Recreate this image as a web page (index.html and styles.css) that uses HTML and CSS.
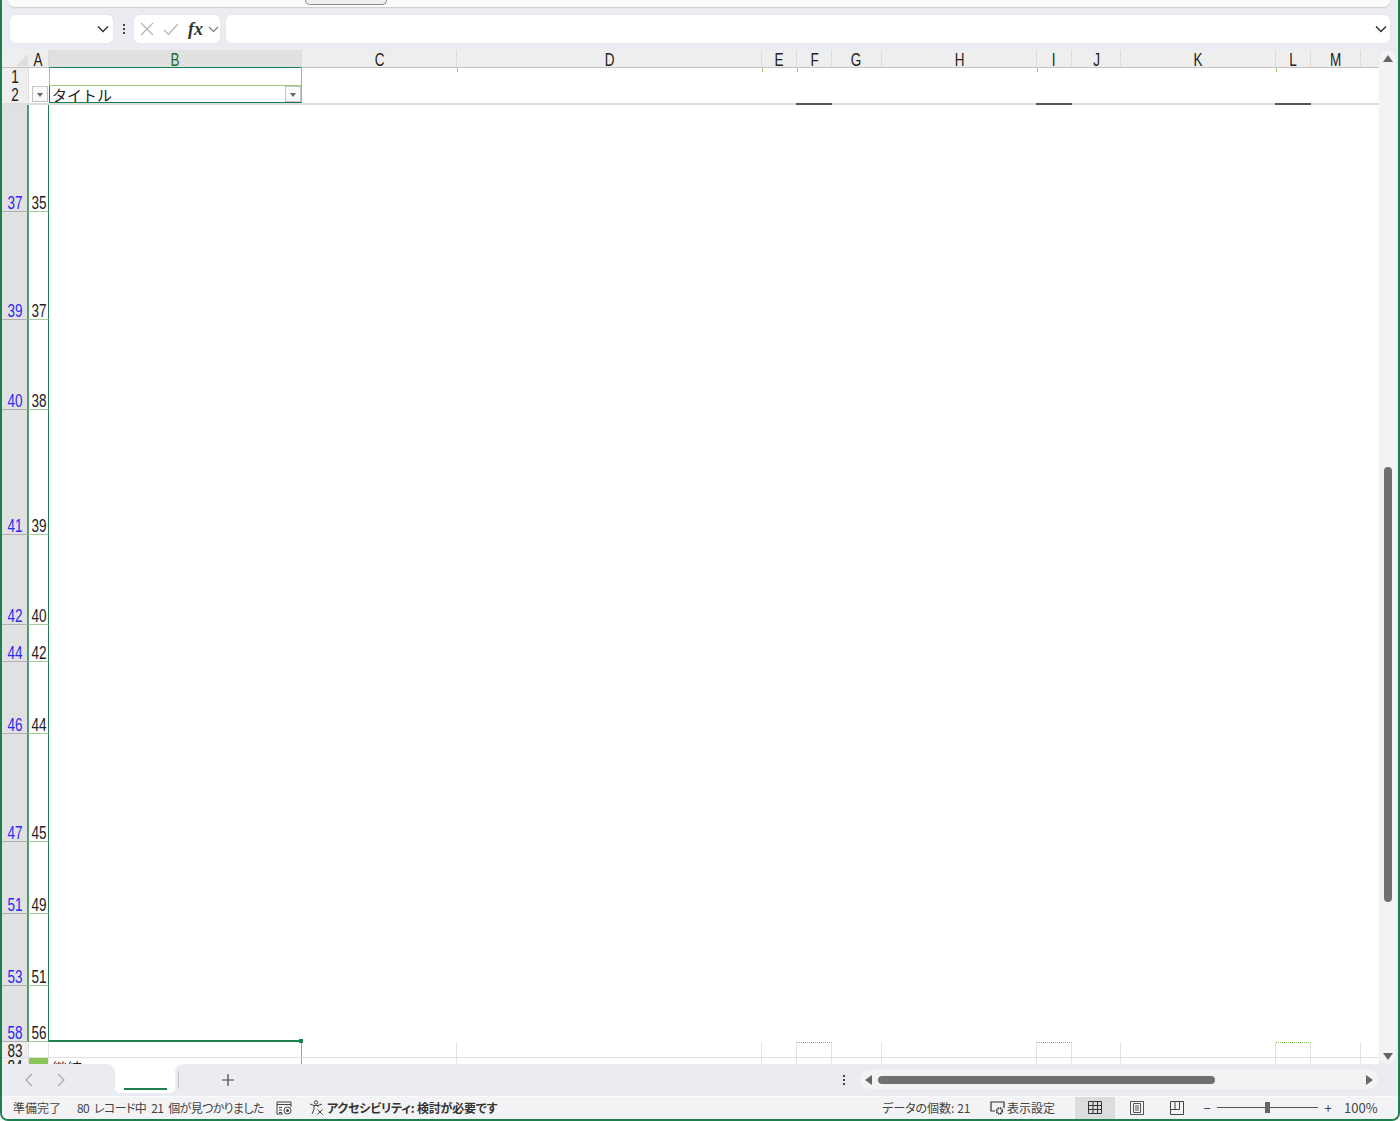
FILE: index.html
```html
<!DOCTYPE html>
<html lang="ja">
<head>
    <meta charset="UTF-8">
    <title>Excel</title>
    <link rel="stylesheet" href="styles.css">
</head>
<body>
<div class="window">
    <!-- bottom edge of the ribbon -->
    <div class="ribbon"><div class="ribbon-pill"></div></div>

    <!-- formula bar -->
    <div class="formula-bar">
        <div class="box name-box">
            <svg width="12" height="8" viewBox="0 0 12 8"><path d="M1 1.500l5 5 5-5" fill="none" stroke="#333" stroke-width="1.500"/></svg>
        </div>
        <div class="dots"><i></i><i></i><i></i></div>
        <div class="box fx-box">
            <svg width="14" height="14" viewBox="0 0 14 14"><path d="M1 1l12 12M13 1L1 13" fill="none" stroke="#b4b4b4" stroke-width="1.200"/></svg>
            <svg width="16" height="14" viewBox="0 0 16 14"><path d="M1 8l4.500 4.500L15 2" fill="none" stroke="#b4b4b4" stroke-width="1.200"/></svg>
            <span class="fx">fx</span>
            <svg width="11" height="7" viewBox="0 0 11 7"><path d="M1 1l4.500 4.500L10 1" fill="none" stroke="#777" stroke-width="1.100"/></svg>
        </div>
        <div class="box input-box">
            <svg width="12" height="8" viewBox="0 0 12 8"><path d="M1 1.500l5 5 5-5" fill="none" stroke="#333" stroke-width="1.500"/></svg>
        </div>
    </div>

    <!-- sheet -->
    <div class="sheet">
        <div class="grid">
            <div class="col-head">
                <div class="corner"></div>
                <div class="ch col-a"><span>A</span></div>
                <div class="ch col-b active"><span>B</span></div>
                <div class="ch col-c"><span>C</span></div>
                <div class="ch col-d"><span>D</span></div>
                <div class="ch col-e"><span>E</span></div>
                <div class="ch col-f"><span>F</span></div>
                <div class="ch col-g"><span>G</span></div>
                <div class="ch col-h"><span>H</span></div>
                <div class="ch col-i"><span>I</span></div>
                <div class="ch col-j"><span>J</span></div>
                <div class="ch col-k"><span>K</span></div>
                <div class="ch col-l"><span>L</span></div>
                <div class="ch col-m"><span>M</span></div>
                <div class="ch col-rest"></div>
            </div>

            <div class="row row-1">
                <div class="rh plain"><span>1</span></div>
                <div class="cell col-a"></div>
                <div class="cell col-b sel-top"></div>
                <div class="cell col-c tick"></div>
                <div class="cell col-d tick"></div>
                <div class="cell col-e tick"></div>
                <div class="cell col-f"></div>
                <div class="cell col-g"></div>
                <div class="cell col-h tick"></div>
                <div class="cell col-i"></div>
                <div class="cell col-j"></div>
                <div class="cell col-k tick"></div>
                <div class="cell col-l"></div>
                <div class="cell col-m"></div>
            </div>
            <div class="row row-2">
                <div class="rh plain"><span>2</span></div>
                <div class="cell col-a"><span class="filter"></span></div>
                <div class="cell col-b sel-title">タイトル<span class="filter"></span></div>
                <div class="cell col-c"></div>
                <div class="cell col-d"></div>
                <div class="cell col-e"></div>
                <div class="cell col-f dark"></div>
                <div class="cell col-g"></div>
                <div class="cell col-h"></div>
                <div class="cell col-i dark"></div>
                <div class="cell col-j"></div>
                <div class="cell col-k"></div>
                <div class="cell col-l dark"></div>
                <div class="cell col-m"></div>
            </div>

            <!-- filtered rows -->
            <div class="data">
                <div class="row filtered" style="height: 107px"><div class="rh"><span>37</span></div><div class="num"><span>35</span></div></div>
                <div class="row filtered" style="height: 108px"><div class="rh"><span>39</span></div><div class="num"><span>37</span></div></div>
                <div class="row filtered" style="height: 90px"><div class="rh"><span>40</span></div><div class="num"><span>38</span></div></div>
                <div class="row filtered" style="height: 125px"><div class="rh"><span>41</span></div><div class="num"><span>39</span></div></div>
                <div class="row filtered" style="height: 90px"><div class="rh"><span>42</span></div><div class="num"><span>40</span></div></div>
                <div class="row filtered" style="height: 37px"><div class="rh"><span>44</span></div><div class="num"><span>42</span></div></div>
                <div class="row filtered" style="height: 72px"><div class="rh"><span>46</span></div><div class="num"><span>44</span></div></div>
                <div class="row filtered" style="height: 108px"><div class="rh"><span>47</span></div><div class="num"><span>45</span></div></div>
                <div class="row filtered" style="height: 72px"><div class="rh"><span>51</span></div><div class="num"><span>49</span></div></div>
                <div class="row filtered" style="height: 72px"><div class="rh"><span>53</span></div><div class="num"><span>51</span></div></div>
                <div class="row filtered last" style="height: 56px"><div class="rh"><span>58</span></div><div class="num"><span>56</span></div><div class="handle"></div></div>
            </div>

            <div class="row row-83">
                <div class="rh plain"><span>83</span></div>
                <div class="cell col-a"></div>
                <div class="cell col-b edge"></div>
                <div class="cell col-c"></div>
                <div class="cell col-d"></div>
                <div class="cell col-e"></div>
                <div class="cell col-f dotted"></div>
                <div class="cell col-g"></div>
                <div class="cell col-h"></div>
                <div class="cell col-i dotted"></div>
                <div class="cell col-j"></div>
                <div class="cell col-k"></div>
                <div class="cell col-l dotted"></div>
                <div class="cell col-m"></div>
            </div>
            <div class="row row-84">
                <div class="rh plain"><span>84</span></div>
                <div class="cell col-a green"></div>
                <div class="cell col-b edge">継続</div>
                <div class="cell col-c"></div>
                <div class="cell col-d"></div>
                <div class="cell col-e"></div>
                <div class="cell col-f"></div>
                <div class="cell col-g"></div>
                <div class="cell col-h"></div>
                <div class="cell col-i"></div>
                <div class="cell col-j"></div>
                <div class="cell col-k"></div>
                <div class="cell col-l"></div>
                <div class="cell col-m"></div>
            </div>
        </div>

        <div class="vscroll">
            <svg width="10" height="7" viewBox="0 0 10 7"><path d="M5 0l5 7H0z" fill="#666"/></svg>
            <div class="vtrack"><div class="vthumb"></div></div>
            <svg width="10" height="7" viewBox="0 0 10 7"><path d="M5 7L0 0h10z" fill="#666"/></svg>
        </div>
    </div>

    <!-- sheet tabs -->
    <div class="tabbar">
        <div class="tab-nav">
            <svg width="9" height="14" viewBox="0 0 9 14"><path d="M8 1L2 7l6 6" fill="none" stroke="#aaa" stroke-width="1.300"/></svg>
            <svg width="9" height="14" viewBox="0 0 9 14"><path d="M1 1l6 6-6 6" fill="none" stroke="#aaa" stroke-width="1.300"/></svg>
        </div>
        <div class="tab"><span class="tab-line"></span></div>
        <div class="tab-rest">
            <span class="tab-sep"></span>
            <svg class="plus" width="12" height="12" viewBox="0 0 12 12"><path d="M6 0v12M0 6h12" stroke="#444" stroke-width="1.200"/></svg>
            <div class="dots tab-dots"><i></i><i></i><i></i></div>
            <div class="hscroll">
                <svg width="7" height="10" viewBox="0 0 7 10"><path d="M0 5l7-5v10z" fill="#666"/></svg>
                <div class="htrack"><div class="hthumb"></div></div>
                <svg width="7" height="10" viewBox="0 0 7 10"><path d="M7 5L0 10V0z" fill="#666"/></svg>
            </div>
        </div>
    </div>

    <!-- status bar -->
    <div class="status">
        <span class="st-ready">準備完了</span>
        <span class="st-records">80 レコード中 21 個が見つかりました</span>
        <svg class="st-macro" width="16" height="14" viewBox="0 0 16 14"><path d="M1 1h14M1 3.500h14M1 1v12h6M15 1v5M3 6.500h3M3 9h3M3 11.500h3" fill="none" stroke="#444"/><circle cx="11.500" cy="9.500" r="3.500" fill="none" stroke="#444"/><circle cx="11.500" cy="9.500" r="1.500" fill="#444"/></svg>
        <svg class="st-access" width="15" height="15" viewBox="0 0 15 15"><circle cx="7" cy="2.500" r="1.700" fill="none" stroke="#444"/><path d="M1 4l4 1.500h4L13 4M5 6v3l-2 5M9 6v1" fill="none" stroke="#444"/><path d="M8.500 9.500l5 5M13.500 9.500l-5 5" stroke="#444"/></svg>
        <b class="st-bold">アクセシビリティ: 検討が必要です</b>
        <span class="st-count">データの個数: 21</span>
        <svg class="st-display" width="15" height="14" viewBox="0 0 15 14"><path d="M5 10H1V1h13v6" fill="none" stroke="#333" stroke-width="1.200"/><circle cx="9.500" cy="10" r="2.800" fill="none" stroke="#333" stroke-width="1.800" stroke-dasharray="1.500 .7"/></svg>
        <span class="st-set">表示設定</span>
        <div class="view on">
            <svg width="14" height="13" viewBox="0 0 14 13"><path d="M.5.500h13v12H.5zM.5 4.500h13M.5 8.500h13M5 .5v12M9.500.5v12" fill="none" stroke="#333"/></svg>
        </div>
        <div class="view second">
            <svg width="14" height="14" viewBox="0 0 14 14"><path d="M.5.500h13v13H.5z" fill="none" stroke="#555"/><path d="M3.500 2.500h7v9h-7zM5 5h4M5 7h4M5 9h4" fill="none" stroke="#555"/></svg>
        </div>
        <div class="view">
            <svg width="14" height="14" viewBox="0 0 14 14"><path d="M.5.500h13v13H.5zM.5 8.500h9V.5M5 .5v8" fill="none" stroke="#444"/></svg>
        </div>
        <span class="zoom-sign">−</span>
        <div class="zoom-track"><div class="zoom-thumb"></div></div>
        <span class="zoom-sign">+</span>
        <span class="zoom-val">100%</span>
    </div>
</div>
</body>
</html>
```

FILE: styles.css
```css
* {
    box-sizing: border-box;
}
html, body {
    margin: 0;
    height: 100%;
    background: #fff;
}
.window {
    width: 1400px;
    height: 1121px;
    display: flex;
    flex-direction: column;
    background: #eaecf1;
    border: solid #1b7f4e;
    border-width: 0 2px 2px 2px;
    border-radius: 0 0 8px 8px;
    overflow: hidden;
    font-family: "Noto Sans CJK JP", "Noto Sans", sans-serif;
}

/* ribbon */
.ribbon {
    height: 7px;
    margin: 0 8px 0 6px;
    background: #fafafa;
    border-radius: 0 0 8px 8px;
    box-shadow: 0 1px 1px #cfcdcc;
}
.ribbon-pill {
    width: 82px;
    height: 5px;
    margin-left: 297px;
    background: #f0f0f0;
    border: 1px solid #8a8a8a;
    border-top: none;
    border-radius: 0 0 5px 5px;
}

/* formula bar */
.formula-bar {
    height: 44px;
    padding: 8px 8px 7px 8px;
    display: flex;
    align-items: stretch;
}
.box {
    background: #fff;
    border-radius: 5px;
    box-shadow: 0 0 1px #c8c8c8;
    display: flex;
    align-items: center;
}
.name-box {
    width: 103px;
    justify-content: flex-end;
    padding-right: 4px;
}
.dots {
    width: 21px;
    display: flex;
    flex-direction: column;
    align-items: center;
    justify-content: center;
    gap: 2px;
}
.dots i {
    width: 2px;
    height: 2px;
    background: #444;
}
.fx-box {
    width: 86px;
    padding-left: 6px;
    gap: 9px;
    margin-right: 6px;
}
.fx {
    font-family: "Liberation Serif", serif;
    font-style: italic;
    font-weight: bold;
    font-size: 18px;
    color: #333;
    margin: 0 -6px 0 0;
    width: 17px;
}
.input-box {
    flex: 1;
    justify-content: flex-end;
    padding-right: 3px;
}

/* sheet */
.sheet {
    height: 1014px;
    display: flex;
    align-items: stretch;
}
.grid {
    width: 1379px;
    margin-left: -2px;
    padding-left: 2px;
    background: #fff;
    overflow: hidden;
    font-family: "Liberation Sans", sans-serif;
    font-size: 18px;
    color: #222;
}
/* the reference font is a condensed one */
.ch span, .rh span, .num span {
    display: inline-block;
    transform: scaleX(.75);
}
.col-head {
    height: 18px;
    display: flex;
    background: #eeeeee;
    border-bottom: 1px solid #c4c4c4;
}
.corner {
    width: 27px;
    position: relative;
}
.corner::after {
    content: "";
    position: absolute;
    right: 1px;
    bottom: 1px;
    border-style: solid;
    border-width: 0 0 12px 12px;
    border-color: transparent transparent #dedede transparent;
}
.ch {
    border-right: 1px solid #dcdcdc;
    text-align: center;
    line-height: 20px;
}
.ch.active {
    background: #e0e0e0;
    color: #1f6b2e;
    border-bottom: 1px solid #1b7f4e;
    height: 18px;
}
.col-a { width: 20px; flex: none; }
.col-b { width: 253px; flex: none; }
.col-c { width: 155px; flex: none; }
.col-d { width: 305px; flex: none; }
.col-e { width: 35px; flex: none; }
.col-f { width: 35px; flex: none; }
.col-g { width: 50px; flex: none; }
.col-h { width: 155px; flex: none; }
.col-i { width: 35px; flex: none; }
.col-j { width: 49px; flex: none; }
.col-k { width: 155px; flex: none; }
.col-l { width: 35px; flex: none; }
.col-m { width: 50px; flex: none; }
.col-rest { flex: 1; border-right: none; }

.row {
    display: flex;
}
.rh {
    width: 27px;
    flex: none;
    padding-left: 1px;
    background: #e1e1e1;
    color: #2a2af0;
    border-right: 2px solid #4f9a73;
    border-bottom: 1px solid #b0b0b0;
    display: flex;
    align-items: flex-end;
    justify-content: center;
    line-height: 16px;
}
.rh.plain {
    background: #eeeeee;
    color: #222;
    border-right: 1px solid #dddddd;
    border-bottom: none;
}
.cell {
    position: relative;
}
.row-1 { height: 18px; }
.row-1 .rh { line-height: 18px; }
.row-2 {
    height: 19px;
    border-bottom: 2px solid #dddddd;
}
.sel-top {
    border-right: 1px solid #a8a8a8;
    border-left: 1px solid #9ccb7c;
    border-bottom: 1px solid #9ccb7c;
}
.sel-title {
    font-family: "Noto Sans CJK JP", sans-serif;
    font-size: 15px;
    line-height: 17px;
    padding-left: 2px;
    border-right: 1px solid #a8a8a8;
    border-left: 1px solid #1b7f4e;
    border-bottom: 1px solid #1b7f4e;
    height: 17px;
}
.tick::after {
    content: "";
    position: absolute;
    right: -1px;
    top: 0;
    width: 1px;
    height: 4px;
    background: #9ccb7c;
}
.dark {
    height: 19px;
    width: 36px;
    margin-left: -1px;
    border-bottom: 2px solid #555;
}
.filter {
    position: absolute;
    right: 0;
    top: 0;
    width: 16px;
    height: 16px;
    background: #fafafa;
    border: 1px solid #c4c4c4;
}
.col-a .filter {
    right: 1px;
}
.filter::after {
    content: "";
    position: absolute;
    left: 4px;
    top: 6px;
    border-style: solid;
    border-width: 4px 3.500px 0 3.500px;
    border-color: #666 transparent transparent transparent;
}
.data {
    background: #fff;
}
.num {
    width: 20px;
    flex: none;
    padding-left: 1px;
    border-right: 1px solid #1b7f4e;
    border-bottom: 1px solid #a4cf9a;
    display: flex;
    align-items: flex-end;
    justify-content: center;
    line-height: 16px;
}
.last {
    position: relative;
}
.last::after {
    content: "";
    position: absolute;
    left: 47px;
    bottom: 0;
    width: 253px;
    height: 2px;
    background: #1b7f4e;
}
.handle {
    position: absolute;
    left: 297px;
    bottom: -1px;
    width: 4px;
    height: 4px;
    background: #1b7f4e;
    z-index: 1;
}
.row-83 {
    height: 16px;
    border-bottom: 1px solid #e0e0e0;
}
.row-83 .rh {
    line-height: 12px;
}
.row-83 .cell, .row-84 .cell {
    border-right: 1px solid #e4e4e4;
}
.row-83 .edge, .row-84 .edge {
    border-right: 1px solid #a0a0a0;
}
.dotted {
    border-top: 1px dotted #7cbf50;
}
.row-84 {
    height: 30px;
}
.row-84 .rh {
    align-items: flex-start;
    line-height: 18px;
}
.green {
    background: #8cc65a;
}
.row-84 .edge {
    font-family: "Noto Sans CJK JP", sans-serif;
    font-size: 15px;
    padding-left: 3px;
    line-height: 20px;
}

/* scrollbars */
.vscroll {
    width: 17px;
    margin: 1px 0 0 0;
    background: #f3f3f4;
    border-radius: 8px;
    display: flex;
    flex-direction: column;
    align-items: center;
    padding: 4px 0;
}
.vtrack {
    flex: 1;
    width: 100%;
    display: flex;
    flex-direction: column;
    align-items: center;
    padding-top: 405px;
}
.vthumb {
    width: 8px;
    height: 435px;
    background: #707070;
    border-radius: 4px;
}
.tabbar {
    height: 32px;
    display: flex;
    background: linear-gradient(#fff 12px, #eaecf1 12px);
}
.tab-nav {
    width: 113px;
    background: #eaecf1;
    border-radius: 0 8px 0 0;
    display: flex;
    align-items: center;
    gap: 24px;
    padding-left: 22px;
}
.tab {
    width: 60px;
    height: 29px;
    background: #fff;
    border-radius: 0 0 5px 5px;
    display: flex;
    justify-content: center;
}
.tab-line {
    width: 43px;
    height: 2px;
    margin-top: 24px;
    background: #1b7f4e;
}
.tab-rest {
    flex: 1;
    background: #eaecf1;
    border-radius: 8px 0 0 0;
    display: flex;
    align-items: center;
    padding-right: 20px;
}
.tab-sep {
    width: 1px;
    height: 18px;
    margin-left: 3px;
    background: #c4c4c4;
}
.plus {
    margin-left: 43px;
}
.tab-dots {
    margin-left: 604px;
    width: 12px;
}
.hscroll {
    width: 518px;
    height: 19px;
    margin-left: 10px;
    background: #f3f3f4;
    border-radius: 9px;
    display: flex;
    align-items: center;
    padding: 0 5px;
    gap: 6px;
}
.htrack {
    flex: 1;
}
.hthumb {
    width: 337px;
    height: 8px;
    background: #707070;
    border-radius: 4px;
}

/* status bar */
.status {
    height: 24px;
    display: flex;
    align-items: center;
    background: #f3f3f5;
    border-top: 1px solid #fafafa;
    font-size: 12px;
    font-feature-settings: "palt";
    color: #444;
    white-space: nowrap;
}
.st-ready { margin-left: 11px; width: 64px; }
.st-records { width: 197px; letter-spacing: -.65px; word-spacing: 3px; }
.st-macro { margin-left: 2px; }
.st-access { margin-left: 17px; }
.st-bold { margin-left: 3px; color: #333; width: 555px; letter-spacing: -.2px; }
.st-count { width: 108px; }
.st-set { margin-left: 2px; width: 51px; }
.view {
    width: 40px;
    height: 100%;
    display: flex;
    align-items: center;
    justify-content: center;
}
.view.on {
    background: #dddddd;
    margin-left: 17px;
}
.view.second {
    margin-left: 2px;
}
.zoom-sign {
    width: 20px;
    text-align: center;
    font-size: 13px;
}
.zoom-track {
    width: 101px;
    height: 1px;
    background: #555;
    position: relative;
}
.zoom-thumb {
    position: absolute;
    left: 48px;
    top: -5px;
    width: 5px;
    height: 11px;
    background: #666;
}
.zoom-val {
    margin-left: 6px;
    font-size: 13px;
}
```
